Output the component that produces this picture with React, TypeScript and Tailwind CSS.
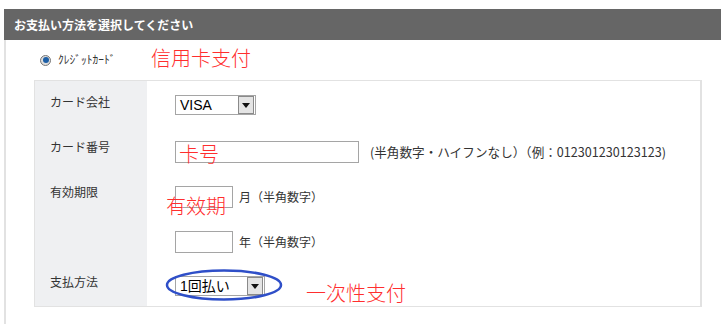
import React from 'react';

const jp = { fontFamily: '"Noto Sans CJK JP", "Liberation Sans", sans-serif' };
const zh = { fontFamily: '"Noto Sans CJK SC", sans-serif' };

const SelectBox = ({ value, width }: { value: string; width: string }) => (
    <div className={`flex items-center h-[20px] border border-[#a5a5a5] bg-white ${width}`}>
        <span className="flex-1 pl-[4px] text-[14px] leading-none text-black" style={{ fontFamily: '"Liberation Sans", "Noto Sans CJK JP", sans-serif' }}>{value}</span>
        <div className="w-[16px] h-[18px] mr-[1px] bg-[#e4e4e4] border border-[#8a8a8a] flex items-center justify-center">
            <svg width="8" height="5" viewBox="0 0 8 5"><path d="M0 0h8L4 5z" fill="#111" /></svg>
        </div>
    </div>
);

const TextBox = ({ width }: { width: string }) => (
    <div className={`h-[22px] border border-[#a5a5a5] bg-white ${width}`} />
);

const Row = ({ label, children }: { label?: string; children?: React.ReactNode }) => (
    <div className="flex h-[45px]">
        <div className="w-[112px] bg-[#eff0f2] pl-[15px] pt-[12px] text-[12px] text-[#333]" style={jp}>{label}</div>
        <div className="flex-1 pl-[28px] pt-[15px]">{children}</div>
    </div>
);

export default function App() {
    return (
        <div className="w-[721px] h-[324px] bg-white overflow-hidden relative" style={jp}>
            <div className="mt-[9px] ml-[4px] h-[31px] bg-[#666666] flex items-center pl-[10px]">
                <span className="text-white font-bold text-[12px]">お支払い方法を選択してください</span>
            </div>

            <div className="ml-[4px] border-l-2 border-[#e2e2e2] h-[284px]">
                <div className="h-[40px] flex items-center pl-[34px]">
                    <div className="w-[11px] h-[11px] rounded-full border border-[#777] bg-[#ddd] flex items-center justify-center">
                        <div className="w-[6px] h-[6px] rounded-full bg-[#1d5fa6]" />
                    </div>
                    <span className="ml-[7px] text-[11.5px] text-[#333]">ｸﾚｼﾞｯﾄｶｰﾄﾞ</span>
                </div>

                <div className="ml-[28px] w-[668px] border border-r-2 border-[#e2e2e2]">
                    <Row label="カード会社">
                        <div className="-mt-[1px]"><SelectBox value="VISA" width="w-[81px]" /></div>
                    </Row>
                    <Row label="カード番号">
                        <div className="flex items-center">
                            <TextBox width="w-[184px]" />
                            <span className="ml-[11px] text-[12.6px] text-[#333]">(半角数字・ハイフンなし）（例：012301230123123)</span>
                        </div>
                    </Row>
                    <Row label="有効期限">
                        <div className="flex items-center">
                            <TextBox width="w-[58px]" />
                            <span className="ml-[6px] text-[12px] text-[#333]">月（半角数字）</span>
                        </div>
                    </Row>
                    <Row>
                        <div className="flex items-center">
                            <TextBox width="w-[58px]" />
                            <span className="ml-[6px] text-[12px] text-[#333]">年（半角数字）</span>
                        </div>
                    </Row>
                    <Row label="支払方法">
                        <SelectBox value="1回払い" width="w-[90px]" />
                    </Row>
                </div>
            </div>

            <span className="absolute left-[151px] top-[48px] text-[20px] font-light leading-none text-[#ff2e2e]" style={zh}>信用卡支付</span>
            <span className="absolute left-[179px] top-[144px] text-[20px] font-light leading-none text-[#ff2e2e]" style={zh}>卡号</span>
            <span className="absolute left-[166px] top-[196px] text-[20px] font-light leading-none text-[#ff2e2e]" style={zh}>有效期</span>
            <span className="absolute left-[306px] top-[283px] text-[20px] font-light leading-none text-[#ff2e2e]" style={zh}>一次性支付</span>
            <svg className="absolute left-[164px] top-[268px]" width="120" height="34" viewBox="0 0 120 34">
                <ellipse cx="60" cy="17" rx="57" ry="14.5" fill="none" stroke="#2f4fc8" strokeWidth="2.5" />
            </svg>
        </div>
    );
}
